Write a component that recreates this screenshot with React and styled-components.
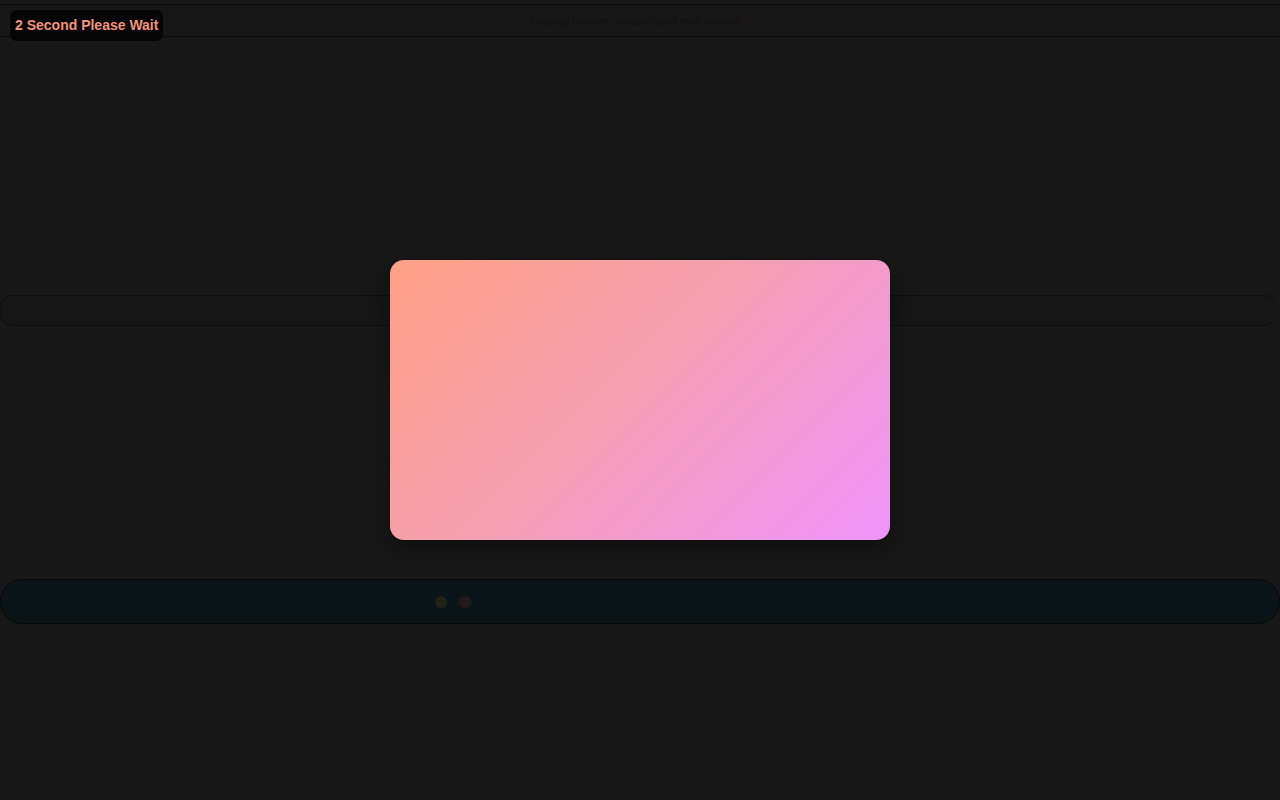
import styled, { createGlobalStyle } from "styled-components";

const GlobalStyle = createGlobalStyle`
  html, body {
    margin: 0;
    padding: 0;
    background: #181818;
    font-family: "Liberation Sans", Arial, sans-serif;
  }
  * { box-sizing: border-box; }
`;

const Page = styled.div`
  display: flex;
  flex-direction: column;
  width: 100%;
  min-height: 100vh;
  padding-top: 4px;
  background: #181818;
`;

const Header = styled.header`
  display: flex;
  align-items: center;
  justify-content: center;
  height: 33px;
  border-top: 1px solid #0c0c0c;
  border-bottom: 1px solid #0c0c0c;
  background: #171717;
  font-size: 11px;
  color: #111111;
`;

const Accent = styled.span`
  color: #1d1212;
  margin-left: 4px;
`;

const Strip = styled.div`
  margin-top: 258px;
  height: 31px;
  margin-right: 4px;
  border-top: 1px solid #0e0e0e;
  border-bottom: 1px solid #0e0e0e;
  border-left: 1px solid #121212;
  border-radius: 12px;
  background: #171717;
`;

const Banner = styled.div`
  display: flex;
  align-items: center;
  justify-content: center;
  gap: 12px;
  margin-top: 253px;
  height: 45px;
  border: 1px solid #060a0b;
  border-radius: 22px;
  background: #0b1518;
  color: #0c1719;
  font-size: 15px;
`;

const Dot = styled.span`
  width: 12px;
  height: 12px;
  border-radius: 50%;
  background: ${(p) => p.$color};
  opacity: 0.2;
`;

const Badge = styled.div`
  position: fixed;
  top: 10px;
  left: 10px;
  display: flex;
  align-items: center;
  height: 31px;
  padding: 0 5px 2px;
  border-radius: 7px;
  background: #050505;
  color: #f2947c;
  font-weight: 700;
  font-size: 14px;
`;

const Overlay = styled.div`
  position: fixed;
  inset: 0;
  display: flex;
  align-items: center;
  justify-content: center;
`;

const Card = styled.div`
  width: 500px;
  height: 280px;
  border-radius: 14px;
  background: linear-gradient(135deg, #fda085 0%, #f59fb0 45%, #f093fb 100%);
  box-shadow: 0 8px 24px rgba(0, 0, 0, 0.45);
`;

export default function App() {
  return (
    <>
      <GlobalStyle />
      <Page>
        <Header>
          Loading content, please stand by a second <Accent>♥</Accent>
        </Header>
        <Strip />
        <Banner>
          <Dot $color="#8a5a1a" />
          <Dot $color="#a0281a" />
          <span>Welcome back — your dashboard will be ready shortly</span>
        </Banner>
      </Page>
      <Badge>2 Second Please Wait</Badge>
      <Overlay>
        <Card />
      </Overlay>
    </>
  );
}
